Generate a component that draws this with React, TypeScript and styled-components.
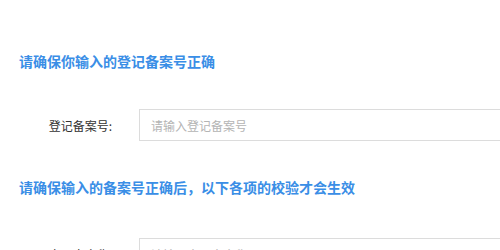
import React from "react";
import styled, { createGlobalStyle } from "styled-components";

const Global = createGlobalStyle`
  html, body { margin: 0; padding: 0; background: #fff; overflow: hidden; }
  body { font-family: "Microsoft YaHei", "Noto Sans CJK SC", sans-serif; }
`;

const Page = styled.div`
  width: 500px;
  height: 250px;
  overflow: hidden;
  padding-top: 51px;
  box-sizing: border-box;
`;

const Title = styled.div<{ $gap: number }>`
  margin-top: ${(p) => p.$gap}px;
  padding-left: 19px;
  font-size: 14px;
  line-height: 20px;
  font-weight: 700;
  color: #3a8ee6;
  white-space: nowrap;
`;

const Row = styled.div<{ $gap: number }>`
  display: flex;
  align-items: center;
  margin-top: ${(p) => p.$gap}px;
`;

const Label = styled.label`
  width: 112px;
  flex: none;
  text-align: right;
  padding-right: 27px;
  box-sizing: content-box;
  font-size: 12px;
  color: #333;
  white-space: nowrap;
`;

const Input = styled.input`
  flex: none;
  width: 420px;
  height: 32px;
  box-sizing: border-box;
  border: 1px solid #dcdcdc;
  border-radius: 0;
  padding: 0 11px;
  font-size: 12px;
  font-family: "Noto Sans CJK SC", sans-serif;
  color: #333;
  outline: none;
  &::placeholder { color: #b4b4b4; }
`;

export default function App() {
  return (
    <>
      <Global />
      <Page>
        <Title $gap={0}>请确保你输入的登记备案号正确</Title>
        <Row $gap={38}>
          <Label>登记备案号:</Label>
          <Input placeholder="请输入登记备案号" />
        </Row>
        <Title $gap={36}>请确保输入的备案号正确后，以下各项的校验才会生效</Title>
        <Row $gap={41}>
          <Label>出理人全称:</Label>
          <Input placeholder="请输入出理人全称" />
        </Row>
      </Page>
    </>
  );
}
